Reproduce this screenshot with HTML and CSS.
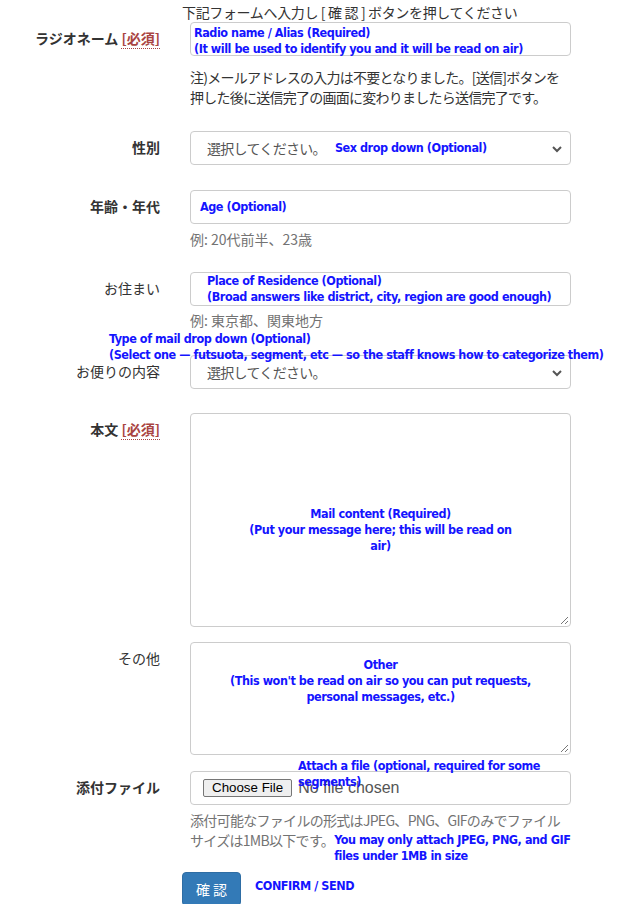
FILE: index.html
```html
<!DOCTYPE html>
<html lang="ja">
<head>
<meta charset="utf-8">
<title>Form</title>
<link rel="stylesheet" href="styles.css">
</head>
<body>
<div class="page">
  <p class="intro">下記フォームへ入力し [ 確 認 ] ボタンを押してください</p>

  <div class="row r1">
    <div class="label bold">ラジオネーム <abbr class="req">[必須]</abbr></div>
    <div class="control input pad-sm">
      <span class="ann ml">Radio name / Alias (Required)<br>(It will be used to identify you and it will be read on air)</span>
    </div>
  </div>
  <p class="note">注)メールアドレスの入力は不要となりました。[送信]ボタンを<br>押した後に送信完了の画面に変わりましたら送信完了です。</p>

  <div class="row r2">
    <div class="label bold">性別</div>
    <div class="control input select">
      <span class="ph">選択してください。</span><span class="ann">Sex drop down (Optional)</span>
      <svg class="chev" width="12" height="8" viewBox="0 0 12 8"><path d="M2 2 L6 6 L10 2" fill="none" stroke="#555" stroke-width="2"/></svg>
    </div>
  </div>

  <div class="row r3">
    <div class="label bold">年齢・年代</div>
    <div class="control input age">
      <span class="ann">Age (Optional)</span>
    </div>
  </div>
  <p class="help h3">例: 20代前半、23歳</p>

  <div class="row r4">
    <div class="label">お住まい</div>
    <div class="control input res">
      <span class="ann ml">Place of Residence (Optional)<br>(Broad answers like district, city, region are good enough)</span>
    </div>
  </div>
  <p class="help h4">例: 東京都、関東地方</p>

  <div class="row r5">
    <div class="ann ml overlay-type">Type of mail drop down (Optional)<br>(Select one — futsuota, segment, etc — so the staff knows how to categorize them)</div>
    <div class="label">お便りの内容</div>
    <div class="control input select">
      <span class="ph">選択してください。</span>
      <svg class="chev" width="12" height="8" viewBox="0 0 12 8"><path d="M2 2 L6 6 L10 2" fill="none" stroke="#555" stroke-width="2"/></svg>
    </div>
  </div>

  <div class="row r6">
    <div class="label bold">本文 <abbr class="req">[必須]</abbr></div>
    <div class="control area body-area">
      <span class="ann ml center-ann">Mail content (Required)<br>(Put your message here; this will be read on<br>air)</span>
      <svg class="grip" width="10" height="10" viewBox="0 0 10 10"><path d="M9 2 L2 9 M9 6 L6 9" stroke="#777" stroke-width="1"/></svg>
    </div>
  </div>

  <div class="row r7">
    <div class="label">その他</div>
    <div class="control area other-area">
      <span class="ann ml center-ann">Other<br>(This won't be read on air so you can put requests,<br>personal messages, etc.)</span>
      <svg class="grip" width="10" height="10" viewBox="0 0 10 10"><path d="M9 2 L2 9 M9 6 L6 9" stroke="#777" stroke-width="1"/></svg>
    </div>
  </div>

  <div class="row r8">
    <div class="label bold">添付ファイル</div>
    <div class="control input file">
      <span class="ann ml overlay-file">Attach a file (optional, required for some<br>segments)</span>
      <span class="fbtn">Choose File</span><span class="fname">No file chosen</span>
    </div>
  </div>
  <div class="help h8">
    <div>添付可能なファイルの形式はJPEG、PNG、GIFのみでファイル</div>
    <div class="h8l2"><span>サイズは1MB以下です。</span><span class="ann ml">You may only attach JPEG, PNG, and GIF<br>files under 1MB in size</span></div>
  </div>

  <div class="submit">
    <span class="btn">確 認</span><span class="ann send">CONFIRM / SEND</span>
  </div>
</div>
</body>
</html>
```

FILE: styles.css
```css
html, body {
  margin: 0;
  padding: 0;
  background: #fff;
}
body {
  font-family: "Noto Sans CJK JP", "Liberation Sans", sans-serif;
  font-size: 14px;
  line-height: 20px;
  color: #333;
}
.page {
  width: 631px;
  height: 904px;
  overflow: hidden;
  padding-top: 2px;
  box-sizing: border-box;
}
p { margin: 0; }
.intro {
  margin-left: 182px;
  height: 20px;
  letter-spacing: -0.35px;
}
.row {
  position: relative;
  display: grid;
  grid-template-columns: 160px 381px;
  column-gap: 30px;
}
.label {
  text-align: right;
  padding-top: 6px;
  line-height: 20px;
  white-space: nowrap;
}
.bold { font-weight: 700; }
.req {
  color: #a94442;
  text-decoration: none;
  border-bottom: 1px dotted #a94442;
}
.control {
  position: relative;
  box-sizing: border-box;
  border: 1px solid #ccc;
  border-radius: 4px;
  background: #fff;
}
.input { height: 34px; }
.ann {
  font-family: "DejaVu Sans Condensed", "DejaVu Sans", sans-serif;
  font-stretch: condensed;
  font-weight: 700;
  font-size: 12.5px;
  letter-spacing: -0.45px;
  line-height: 16px;
  color: #1414ff;
  white-space: nowrap;
}
.ml { display: inline-block; }
.pad-sm { padding: 2px 3px 0; }
.note {
  margin: 11px 0 0 190px;
  letter-spacing: -0.75px;
}
.r2 { margin-top: 24px; }
.select {
  display: flex;
  align-items: center;
  padding: 0 16px;
}
.ph {
  color: #555;
  margin-right: 9px;
  letter-spacing: -0.7px;
}
.chev {
  position: absolute;
  right: 7px;
  top: 13px;
}
.r3 { margin-top: 25px; }
.age {
  display: flex;
  align-items: center;
  padding: 0 9px;
}
.help {
  margin-left: 190px;
  color: #737373;
}
.h3 { margin-top: 5px; }
.r4 { margin-top: 23px; }
.res { padding: 0 16px; }
.h4 { margin-top: 4px; }
.r5 { margin-top: 25px; }
.overlay-type {
  position: absolute;
  left: 109px;
  top: -24px;
  z-index: 2;
}
.r6 { margin-top: 24px; }
.area {
  display: flex;
  justify-content: center;
  align-items: flex-start;
}
.body-area { height: 214px; padding-top: 92px; }
.other-area { height: 113px; padding-top: 14px; }
.center-ann { text-align: center; }
.grip {
  position: absolute;
  right: 1px;
  bottom: 1px;
}
.r7 { margin-top: 15px; }
.r8 { margin-top: 16px; }
.file {
  display: flex;
  align-items: center;
  padding: 0 12px;
}
.overlay-file {
  position: absolute;
  left: 107px;
  top: -14px;
  z-index: 2;
}
.fbtn {
  font-family: "Liberation Sans", Arial, sans-serif;
  font-size: 13.33px;
  line-height: 16px;
  color: #000;
  background: #efefef;
  border: 1px solid #767676;
  border-radius: 2px;
  padding: 0 8px;
  margin-right: 6px;
}
.fname {
  font-family: "Liberation Sans", Arial, sans-serif;
  font-size: 16px;
  color: #555;
}
.h8 {
  margin-top: 5px;
  letter-spacing: -0.7px;
}
.h8l2 {
  display: flex;
  align-items: flex-start;
}
.h8l2 .ann {
  padding-top: 2px;
  letter-spacing: -0.45px;
}
.submit {
  margin: 8px 0 0 182px;
  display: flex;
  align-items: center;
}
.btn {
  display: inline-block;
  box-sizing: border-box;
  height: 34px;
  width: 59px;
  line-height: 32px;
  text-align: center;
  color: #fff;
  background: #337ab7;
  border: 1px solid #2e6da4;
  border-radius: 4px;
}
.send { margin-left: 14px; margin-top: -6px; }
```
